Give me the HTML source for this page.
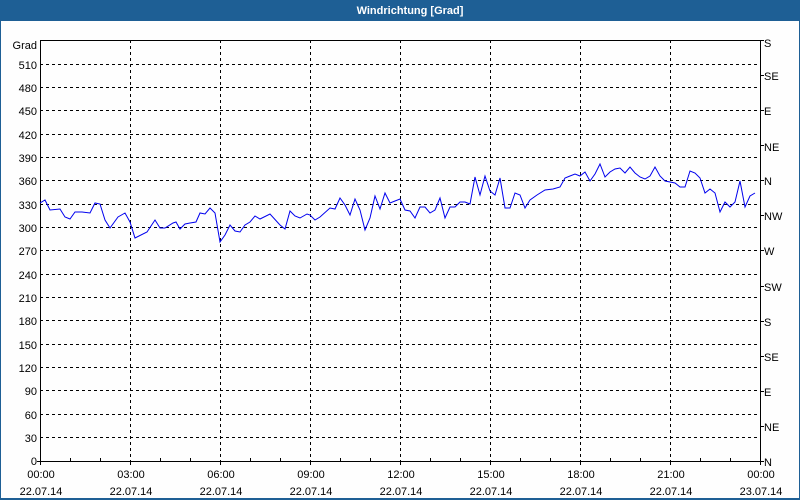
<!DOCTYPE html>
<html><head><meta charset="utf-8"><style>
html,body{margin:0;padding:0;background:#fff;}
svg{display:block;font-family:"Liberation Sans",Tahoma,sans-serif;font-size:11px;}
</style></head><body>
<svg width="800" height="500" xmlns="http://www.w3.org/2000/svg">
<rect x="0" y="0" width="800" height="500" fill="#fefefe"/>
<rect x="0" y="0" width="800" height="21" fill="#1e5f95"/>
<rect x="0" y="0" width="1" height="500" fill="#1e5f95"/>
<rect x="799" y="0" width="1" height="500" fill="#1e5f95"/>
<rect x="0" y="498" width="800" height="2" fill="#1e5f95"/>
<text x="410" y="14" fill="#fff" font-weight="bold" text-anchor="middle">Windrichtung [Grad]</text>
<g stroke="#000" stroke-width="1" stroke-dasharray="3,3" shape-rendering="crispEdges">
<line x1="40" y1="64.5" x2="760" y2="64.5"/><line x1="40" y1="87.5" x2="760" y2="87.5"/><line x1="40" y1="110.5" x2="760" y2="110.5"/><line x1="40" y1="134.5" x2="760" y2="134.5"/><line x1="40" y1="157.5" x2="760" y2="157.5"/><line x1="40" y1="180.5" x2="760" y2="180.5"/><line x1="40" y1="204.5" x2="760" y2="204.5"/><line x1="40" y1="227.5" x2="760" y2="227.5"/><line x1="40" y1="250.5" x2="760" y2="250.5"/><line x1="40" y1="274.5" x2="760" y2="274.5"/><line x1="40" y1="297.5" x2="760" y2="297.5"/><line x1="40" y1="320.5" x2="760" y2="320.5"/><line x1="40" y1="344.5" x2="760" y2="344.5"/><line x1="40" y1="367.5" x2="760" y2="367.5"/><line x1="40" y1="390.5" x2="760" y2="390.5"/><line x1="40" y1="414.5" x2="760" y2="414.5"/><line x1="40" y1="437.5" x2="760" y2="437.5"/>
<line x1="130.5" y1="40" x2="130.5" y2="461"/><line x1="220.5" y1="40" x2="220.5" y2="461"/><line x1="310.5" y1="40" x2="310.5" y2="461"/><line x1="400.5" y1="40" x2="400.5" y2="461"/><line x1="490.5" y1="40" x2="490.5" y2="461"/><line x1="580.5" y1="40" x2="580.5" y2="461"/><line x1="670.5" y1="40" x2="670.5" y2="461"/>
</g>
<rect x="40.5" y="40.5" width="720" height="421" fill="none" stroke="#000" shape-rendering="crispEdges"/>
<g stroke="#000" shape-rendering="crispEdges">
<path d="M70.5 461v-3M100.5 461v-3M160.5 461v-3M190.5 461v-3M250.5 461v-3M280.5 461v-3M340.5 461v-3M370.5 461v-3M430.5 461v-3M460.5 461v-3M520.5 461v-3M550.5 461v-3M610.5 461v-3M640.5 461v-3M700.5 461v-3M730.5 461v-3"/>
<path d="M40.5 461v4M130.5 461v4M220.5 461v4M310.5 461v4M400.5 461v4M490.5 461v4M580.5 461v4M670.5 461v4M760.5 461v4"/>
<path d="M37 461.5h4M760 40.5h4M760 75.5h4M760 110.5h4M760 145.5h4M760 180.5h4M760 215.5h4M760 250.5h4M760 286.5h4M760 321.5h4M760 356.5h4M760 391.5h4M760 426.5h4M760 461.5h4"/>
</g>
<polyline fill="none" stroke="#0000ee" stroke-width="1" points="40,203 45,200 50,210 60,209 65,217 70,219 75,212 82,212 90,213 95,203 100,204 105,220 110,228 118,217 125,213 130,222 135,238 147,232 155,220 160,228 165,228 173,223 176,222 180,229 185,224 190,223 196,222 200,213 205,214 210,208 215,213 220,242 225,235 230,225 235,231 240,232 245,225 250,222 255,216 260,219 270,214 280,225 285,229 290,211 295,216 300,218 307,214 310,215 315,220 320,217 330,208 335,209 340,198 345,205 350,215 355,199 360,210 365,230 370,218 375,196 380,209 385,193 390,203 395,201 400,199 405,210 410,211 415,218 420,207 425,207 430,213 435,210 440,198 445,218 450,207 455,207 460,202 465,202 470,204 475,177 480,195 485,176 490,191 495,195 500,178 505,208 510,208 515,193 520,195 525,208 530,200 537,195 545,190 553,189 560,187 565,178 570,176 575,174 580,176 585,172 590,181 595,174 600,164 605,177 610,172 615,169 620,168 625,173 630,167 635,173 640,177 645,179 650,176 655,167 660,176 665,181 670,182 675,183 680,187 685,187 690,171 695,173 700,178 705,193 710,189 715,193 720,212 725,202 730,207 735,202 740,181 745,207 750,196 755,193"/>
<g fill="#000" text-anchor="end">
<text x="37" y="49">Grad</text>
<text x="37" y="69">510</text><text x="37" y="92">480</text><text x="37" y="115">450</text><text x="37" y="139">420</text><text x="37" y="162">390</text><text x="37" y="185">360</text><text x="37" y="209">330</text><text x="37" y="232">300</text><text x="37" y="255">270</text><text x="37" y="279">240</text><text x="37" y="302">210</text><text x="37" y="325">180</text><text x="37" y="349">150</text><text x="37" y="372">120</text><text x="37" y="395">90</text><text x="37" y="419">60</text><text x="37" y="442">30</text><text x="37" y="465">0</text>
</g>
<g fill="#000">
<text x="764" y="47">S</text><text x="764" y="80">SE</text><text x="764" y="115">E</text><text x="764" y="151">NE</text><text x="764" y="185">N</text><text x="764" y="220">NW</text><text x="764" y="255">W</text><text x="764" y="291">SW</text><text x="764" y="326">S</text><text x="764" y="361">SE</text><text x="764" y="396">E</text><text x="764" y="431">NE</text><text x="764" y="466">N</text>
</g>
<g fill="#000" text-anchor="middle">
<text x="41" y="478">00:00</text><text x="41" y="495">22.07.14</text>
<text x="131" y="478">03:00</text><text x="131" y="495">22.07.14</text>
<text x="221" y="478">06:00</text><text x="221" y="495">22.07.14</text>
<text x="311" y="478">09:00</text><text x="311" y="495">22.07.14</text>
<text x="401" y="478">12:00</text><text x="401" y="495">22.07.14</text>
<text x="491" y="478">15:00</text><text x="491" y="495">22.07.14</text>
<text x="581" y="478">18:00</text><text x="581" y="495">22.07.14</text>
<text x="671" y="478">21:00</text><text x="671" y="495">22.07.14</text>
<text x="761" y="478">00:00</text><text x="761" y="495">23.07.14</text>
</g>
</svg>
</body></html>
